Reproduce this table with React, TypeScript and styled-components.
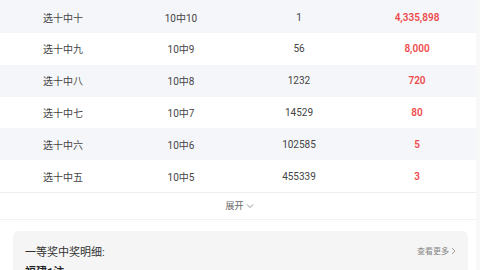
import styled, { createGlobalStyle } from 'styled-components';

const GlobalStyle = createGlobalStyle`
  html, body {
    margin: 0;
    padding: 0;
    background: #f8f8f8;
    font-family: Roboto, "Noto Sans CJK SC", "Noto Sans", sans-serif;
  }
  * {
    box-sizing: border-box;
  }
`;

const prizes = [
  { name: '选十中十', rule: '10中10', count: '1', money: '4,335,898' },
  { name: '选十中九', rule: '10中9', count: '56', money: '8,000' },
  { name: '选十中八', rule: '10中8', count: '1232', money: '720' },
  { name: '选十中七', rule: '10中7', count: '14529', money: '80' },
  { name: '选十中六', rule: '10中6', count: '102585', money: '5' },
  { name: '选十中五', rule: '10中5', count: '455339', money: '3' },
];

export default function App() {
  return (
    <>
      <GlobalStyle />
      <Page>
        <Table>
          {prizes.map((p, index) => (
            <Row key={p.name} striped={index % 2 === 0}>
              <Cell>{p.name}</Cell>
              <Cell>{p.rule}</Cell>
              <Cell>{p.count}</Cell>
              <Money>{p.money}</Money>
            </Row>
          ))}
        </Table>
        <Expand>
          展开
          <svg width="8" height="6" viewBox="0 0 8 6">
            <path d="M1 1.5 L4 4.5 L7 1.5" fill="none" stroke="#888" strokeWidth="0.9" />
          </svg>
        </Expand>
        <Detail>
          <DetailHead>
            <DetailTitle>一等奖中奖明细:</DetailTitle>
            <More>
              查看更多
              <svg width="5" height="8" viewBox="0 0 5 8">
                <path d="M1 1 L4 4 L1 7" fill="none" stroke="#999" strokeWidth="0.9" />
              </svg>
            </More>
          </DetailHead>
          <Province>福建1注</Province>
        </Detail>
      </Page>
    </>
  );
}

const Page = styled.div`
  width: 476px;
  height: 270px;
  background: #fff;
  overflow: hidden;
`;

const Table = styled.div`
  display: flex;
  flex-direction: column;
  border-bottom: 1px solid #efeff2;
`;

const Row = styled.div<{ striped: boolean }>`
  display: grid;
  grid-template-columns: repeat(4, 1fr);
  align-items: center;
  height: 31.8px;
  padding-left: 4px;
  background: ${(props) => (props.striped ? '#f5f6fa' : '#fff')};

  &:first-child {
    height: 33px;
    padding-top: 1px;
  }
`;

const Cell = styled.div`
  text-align: center;
  font-size: 10px;
  color: #444;
`;

const Money = styled(Cell)`
  color: #ee4b4b;
  font-weight: 600;
`;

const Expand = styled.div`
  height: 27px;
  display: flex;
  align-items: center;
  justify-content: center;
  gap: 2px;
  padding-left: 3px;
  font-size: 9px;
  color: #666;
  border-bottom: 1px solid #f2f2f4;
`;

const Detail = styled.div`
  margin: 11px 8px 0 13px;
  padding: 12px 12px 0 12px;
  background: #f5f5f5;
  border-radius: 6px;
  height: 60px;
`;

const DetailHead = styled.div`
  display: flex;
  justify-content: space-between;
  align-items: center;
`;

const DetailTitle = styled.div`
  font-size: 11px;
  color: #333;
`;

const More = styled.div`
  display: flex;
  align-items: center;
  gap: 2px;
  font-size: 8px;
  color: #888;
`;

const Province = styled.div`
  margin-top: 4px;
  font-size: 11px;
  font-weight: 700;
  color: #222;
`;
